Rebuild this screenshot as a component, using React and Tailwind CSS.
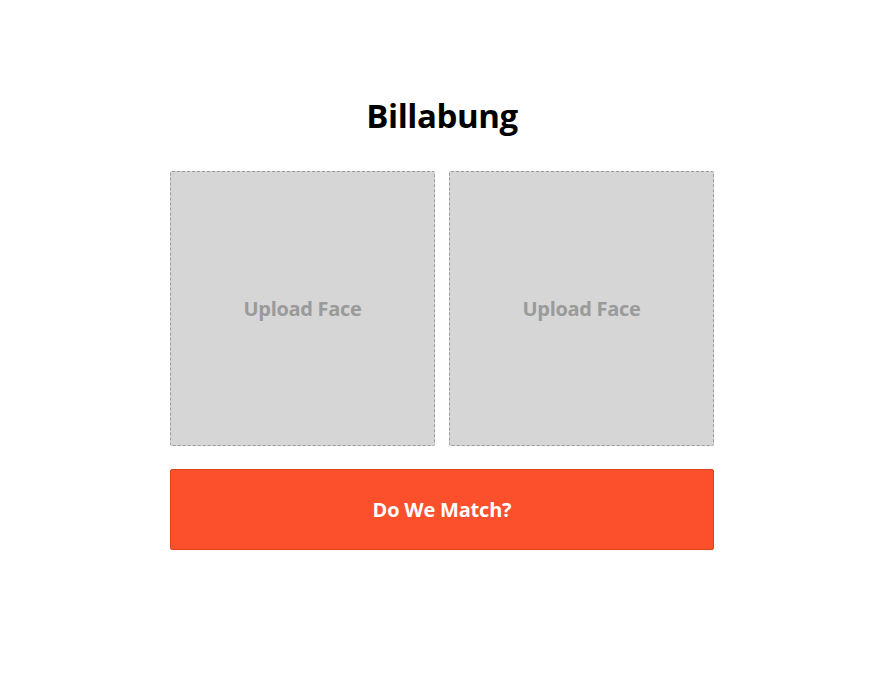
export default function App() {
  const font = { fontFamily: '"Open Sans", "Noto Sans", sans-serif' };
  return (
    <div className="min-h-[685px] w-full bg-white" style={font}>
      <div className="ml-[170px] w-[544px] pt-[92px]">
        <h1 className="text-center text-[33px] font-bold leading-[48px] text-black tracking-[-0.4px]">Billabung</h1>
        <div className="mt-[31px] grid grid-cols-2 gap-[14px]">
          {[0, 1].map((i) => (
            <div key={i} className="flex h-[275px] items-center justify-center rounded-[2px] border border-dashed border-[#9a9a9a] bg-[#d6d6d6]">
              <span className="text-[20px] font-bold text-[#9a9a9a] tracking-[-0.3px]">Upload Face</span>
            </div>
          ))}
        </div>
        <button className="mt-[23px] flex h-[81px] w-full items-center justify-center rounded-[2px] border border-[#e0441f] bg-[#fc502d] text-[20px] font-bold text-white tracking-[-0.2px]">
          Do We Match?
        </button>
      </div>
    </div>
  );
}
